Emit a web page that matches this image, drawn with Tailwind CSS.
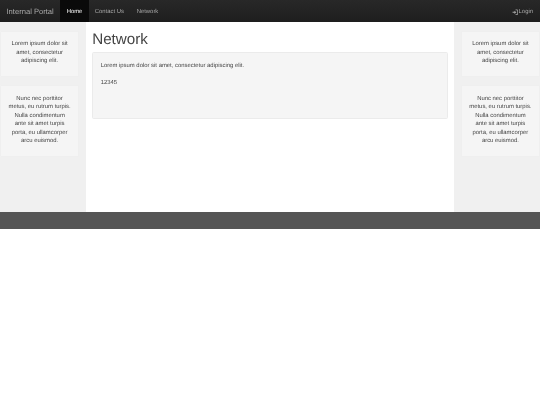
<!DOCTYPE html>
<html lang="en">
<head>
<meta charset="utf-8">
<title>Internal Portal</title>
<script src="https://cdn.jsdelivr.net/npm/@tailwindcss/browser@4"></script>
</head>
<body class="bg-white font-['Liberation_Sans',Arial,sans-serif] text-[5.9px] leading-[8.44px] text-[#444]">
<div class="blur-[0.3px] will-change-transform [text-rendering:geometricPrecision]">
<nav class="flex h-[22px] items-stretch justify-between bg-[linear-gradient(#282828,#1e1e1e)] text-[#a8a8a8]">
  <div class="flex items-stretch">
    <a class="flex items-center px-[6.500px] pt-[2px] text-[7.600px]">Internal Portal</a>
    <a class="flex items-center bg-[#0a0a0a] px-[6.400px] pt-[2px] text-white">Home</a>
    <a class="flex items-center pr-[6.400px] pl-[6px] pt-[2px]">Contact Us</a>
    <a class="flex items-center px-[6.400px] pt-[2px]">Network</a>
  </div>
  <a class="flex items-center gap-[0.500px] pr-[7px] pt-[2px]">
    <svg viewBox="0 0 12 12" class="h-[6.500px] w-[6.500px] fill-current"><path d="M6.500 1h3A1.500 1.500 0 0 1 11 2.500v7A1.500 1.500 0 0 1 9.500 11h-3v-1.300h3a.3.3 0 0 0 .2-.2v-7a.3.3 0 0 0-.2-.2h-3zM4.500 3l3.500 3-3.500 3V7H1V5h3.500z"/></svg>
    <span>Login</span>
  </a>
</nav>
<div class="flex h-[189.500px] items-stretch">
  <aside class="flex w-[85.700px] shrink-0 flex-col gap-[8.500px] bg-[#f0f0f0] pt-[8.500px] pr-[6.500px] text-center">
    <div class="h-[46px] rounded-[1.500px] border-[0.500px] border-[#efefef] bg-[#f5f5f5] px-[7.100px] pt-[8.800px]"><p>Lorem ipsum dolor sit amet, consectetur adipiscing elit.</p></div>
    <div class="h-[71.500px] rounded-[1.500px] border-[0.500px] border-[#efefef] bg-[#f5f5f5] px-[7.100px] pt-[8.800px]"><p>Nunc nec porttitor metus, eu rutrum turpis. Nulla condimentum ante sit amet turpis porta, eu ullamcorper arcu euismod.</p></div>
  </aside>
  <main class="min-w-0 flex-1 px-[6.500px]">
    <h1 class="mt-[9.500px] mb-[3.500px] text-[15.200px] leading-[16.700px] font-normal">Network</h1>
    <div class="h-[67px] rounded-[1.500px] border-[0.500px] border-[#ebebeb] bg-[#f5f5f5] px-[7.500px] pt-[9px]">
      <p class="mb-[8.500px]">Lorem ipsum dolor sit amet, consectetur adipiscing elit.</p>
      <p>12345</p>
    </div>
  </main>
  <aside class="flex w-[85.700px] shrink-0 flex-col gap-[8.500px] bg-[#f0f0f0] pt-[8.500px] pl-[6.500px] text-center">
    <div class="h-[46px] rounded-[1.500px] border-[0.500px] border-[#efefef] bg-[#f5f5f5] px-[7.100px] pt-[8.800px]"><p>Lorem ipsum dolor sit amet, consectetur adipiscing elit.</p></div>
    <div class="h-[71.500px] rounded-[1.500px] border-[0.500px] border-[#efefef] bg-[#f5f5f5] px-[7.100px] pt-[8.800px]"><p>Nunc nec porttitor metus, eu rutrum turpis. Nulla condimentum ante sit amet turpis porta, eu ullamcorper arcu euismod.</p></div>
  </aside>
</div>
<footer class="h-[17px] bg-[#555]"></footer>
</div>
</body>
</html>
